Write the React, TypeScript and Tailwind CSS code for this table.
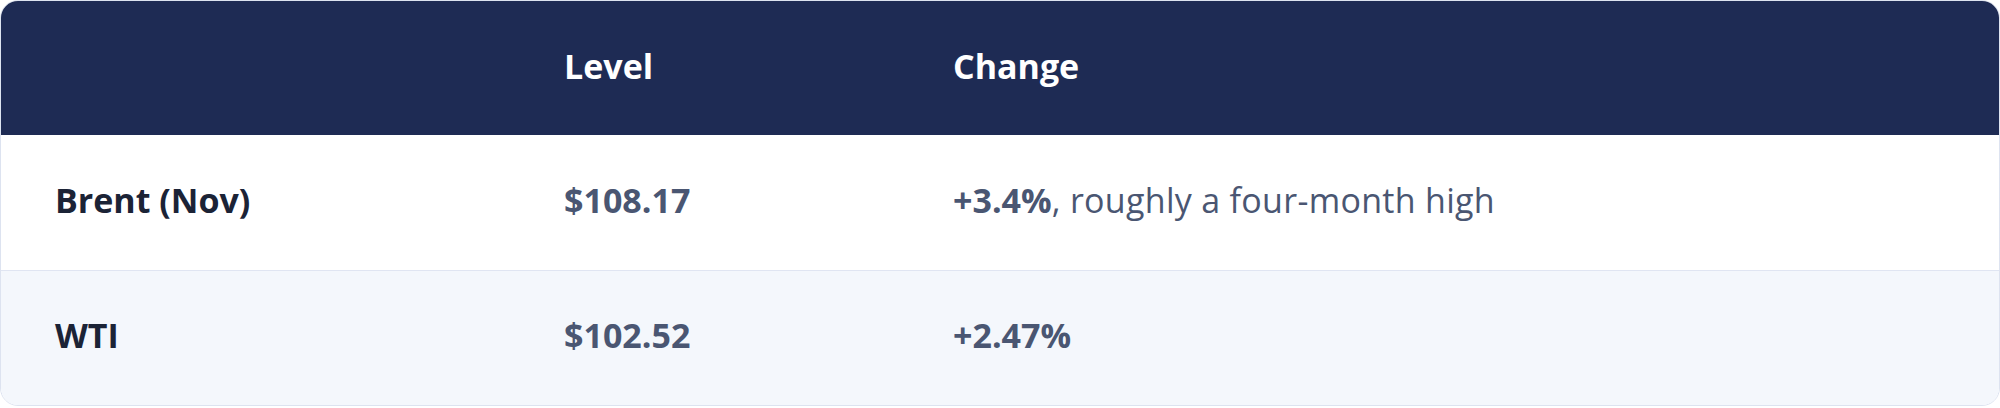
import React from "react";

const rows = [
  { name: "Brent (Nov)", level: "$108.17", change: "+3.4%", note: ", roughly a four-month high", bg: "bg-white" },
  { name: "WTI", level: "$102.52", change: "+2.47%", note: "", bg: "bg-[#f4f7fc]" },
];

export default function App() {
  return (
    <div className="w-[2000px] h-[408px] bg-white" style={{ fontFamily: "'Open Sans', 'Noto Sans', sans-serif" }}>
      <div className="rounded-[18px] border border-[#dde3f0] overflow-hidden text-[34px] leading-none">
        <div className="grid grid-cols-[509px_389px_1fr] h-[134px] pb-[5px] items-center bg-[#1e2b54] text-white font-bold">
          <div className="pl-[54px]"></div>
          <div className="pl-[54px]">Level</div>
          <div className="pl-[54px]">Change</div>
        </div>
        {rows.map((r, i) => (
          <div
            key={r.name}
            className={`grid grid-cols-[509px_389px_1fr] h-[135px] pb-[6px] items-center ${r.bg} ${i > 0 ? "border-t border-[#e0e5f2]" : ""}`}
          >
            <div className="pl-[54px] font-bold text-[#1b2336]">{r.name}</div>
            <div className="pl-[54px] font-bold text-[#4a5672]">{r.level}</div>
            <div className="pl-[54px] text-[#4a5672]">
              <span className="font-bold">{r.change}</span>
              <span className="tracking-[0.3px]">{r.note}</span>
            </div>
          </div>
        ))}
      </div>
    </div>
  );
}
